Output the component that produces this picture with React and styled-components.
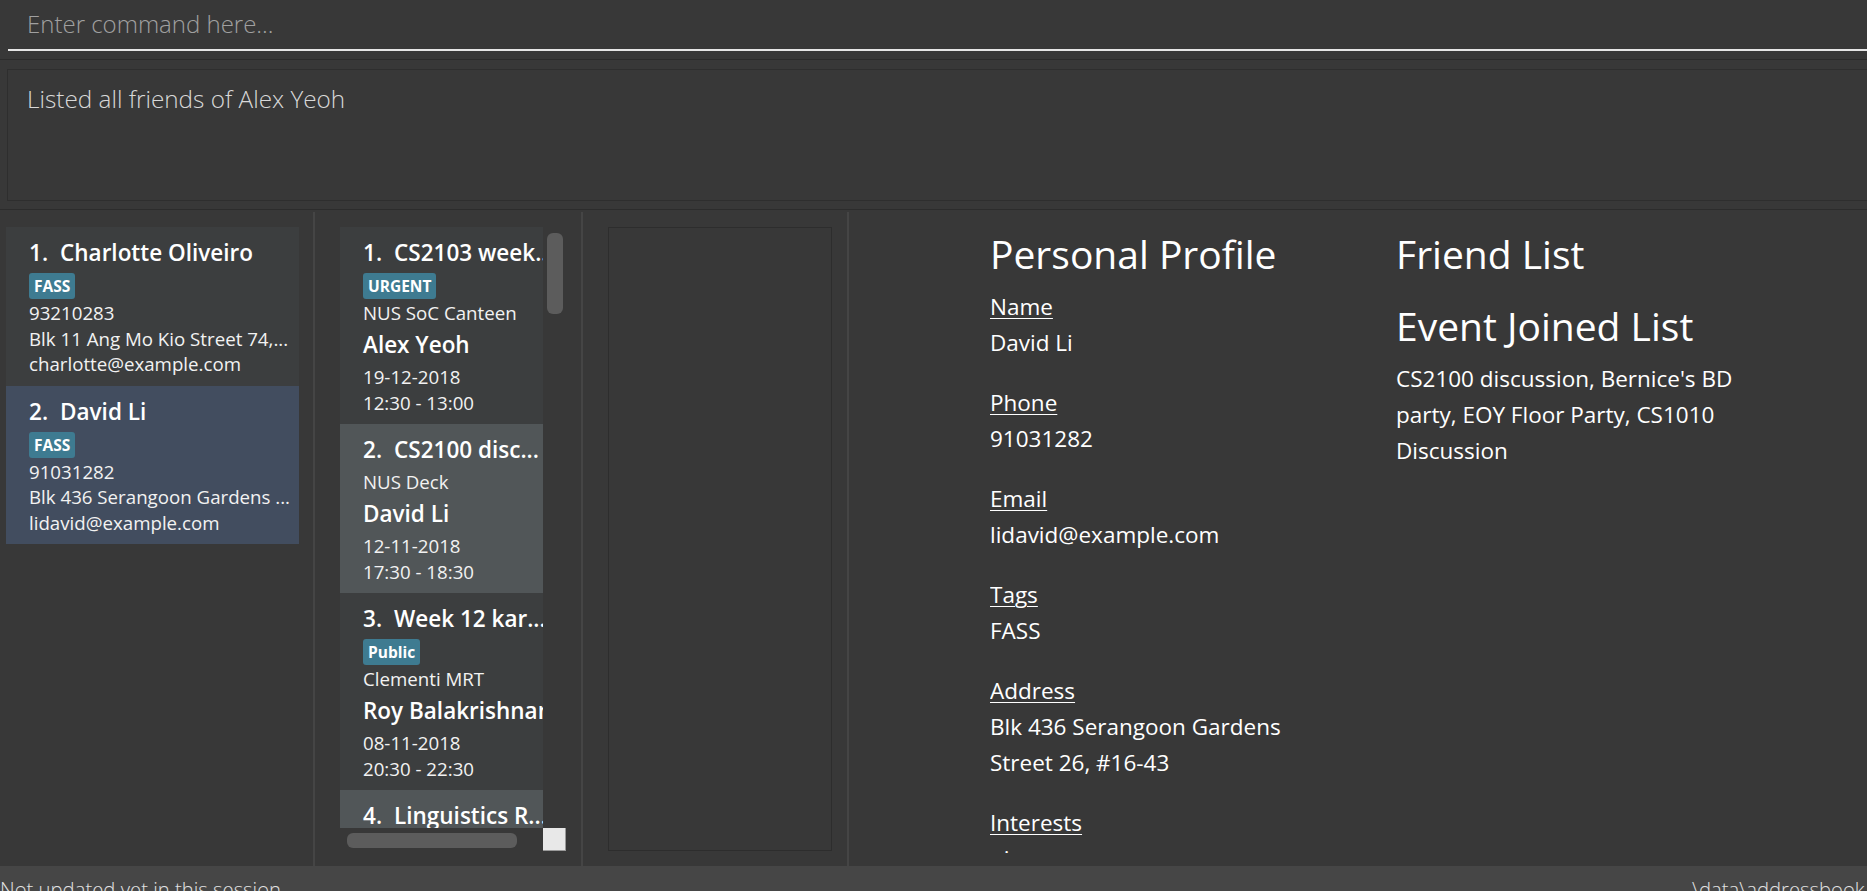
import React from "react"
import styled, { createGlobalStyle } from "styled-components"

const GlobalStyle = createGlobalStyle`
  html, body, #root {
    margin: 0;
    height: 100%;
  }
  body {
    background: #383838;
    color: #fff;
    font-family: "Open Sans", "Noto Sans", sans-serif;
    overflow: hidden;
  }
  * {
    box-sizing: border-box;
  }
`

const Window = styled.div`
  display: flex;
  flex-direction: column;
  height: 100vh;
  background: #383838;
`

const CommandPane = styled.div`
  flex: none;
  height: 60px;
  padding-left: 8px;
  border-bottom: 1px solid #2c2c2c;
`

const CommandInput = styled.input`
  display: block;
  width: 100%;
  height: 51px;
  padding: 0 0 3px 19px;
  border: none;
  border-bottom: 2px solid #e6e6e6;
  background: transparent;
  color: #fff;
  font-family: inherit;
  font-size: 24px;
  font-weight: 300;
  outline: none;

  &::placeholder {
    color: #a0a0a0;
  }
`

const ResultPane = styled.div`
  flex: none;
  height: 150px;
  padding: 9px 0 8px 7px;
  border-bottom: 1px solid #2c2c2c;
`

const ResultBox = styled.div`
  height: 132px;
  padding: 12px 0 0 19px;
  border: 1px solid #2e2e2e;
  border-right: none;
  color: #d8d8d8;
  font-size: 24.3px;
  font-weight: 300;
`

const Main = styled.div`
  flex: 1;
  min-height: 0;
  display: flex;
`

const Divider = styled.div`
  flex: none;
  width: 2px;
  margin-top: 2px;
  background: #454545;
`

const PersonColumn = styled.div`
  flex: none;
  width: 313px;
  padding: 17px 14px 0 6px;
  overflow: hidden;
`

const Card = styled.div`
  width: ${(p) => p.$width}px;
  padding: 10px 0 9px 23px;
  background: ${(p) => p.$bg};
  overflow: hidden;
  white-space: nowrap;
`

const CardTitle = styled.div`
  font-size: 22.5px;
  font-weight: 600;
  line-height: 32px;
  color: #fff;
`

const Index = styled.span`
  margin-right: 12px;
`

const TagRow = styled.div`
  display: flex;
  gap: 6px;
  height: 26px;
  margin: 4px 0 -2px;
`

const Tag = styled.span`
  height: 26px;
  padding: 0 5px;
  border-radius: 3px;
  background: #3e7b91;
  color: #fff;
  font-size: 15.5px;
  font-weight: 700;
  line-height: 26px;
`

const Details = styled.div`
  margin-top: 3px;
`

const Line = styled.div`
  font-size: 18.7px;
  line-height: 25.5px;
  color: #f2f2f2;
  margin-top: ${(p) => p.$gap || 0}px;
`

const Organizer = styled.div`
  margin-top: 4px;
  font-size: 22.5px;
  font-weight: 600;
  line-height: 30px;
  color: #fff;
`

const EventColumn = styled.div`
  flex: none;
  width: 266px;
  padding: 17px 15px 0 25px;
`

const ScrollArea = styled.div`
  display: grid;
  grid-template-columns: 203px 23px;
  grid-template-rows: 601px 23px;
`

const Viewport = styled.div`
  overflow: hidden;
`

const VTrack = styled.div`
  padding: 6px 0 0 4px;
`

const VThumb = styled.div`
  width: 16px;
  height: 81px;
  border-radius: 6px;
  background: #5c5c5c;
`

const HTrack = styled.div`
  padding: 5px 0 0 7px;
`

const HThumb = styled.div`
  width: 170px;
  height: 15px;
  border-radius: 6px;
  background: #5c5c5c;
`

const Corner = styled.div`
  background: #e8e8e8;
  border-right: 1px solid #9a9a9a;
  border-bottom: 1px solid #9a9a9a;
`

const BlankColumn = styled.div`
  flex: none;
  width: 264px;
  padding: 17px 15px 0 25px;
`

const EmptyBox = styled.div`
  width: 224px;
  height: 624px;
  border: 1px solid #2d2d2d;
`

const ProfileColumn = styled.div`
  flex: 1;
  min-width: 0;
  padding: 20px 0 13px 141px;
`

const ProfileGrid = styled.div`
  display: grid;
  grid-template-columns: 345px 345px;
  column-gap: 61px;
  align-items: start;
  height: 100%;
  overflow: hidden;
`

const Heading = styled.h2`
  margin: 0 0 11px;
  font-size: 39px;
  font-weight: 400;
  line-height: 48px;
  color: #fff;
`

const Field = styled.div`
  margin-bottom: 24px;
  font-size: 22.5px;
  line-height: 36px;
  color: #fff;
`

const FieldLabel = styled.div`
  text-decoration: underline;
  text-underline-offset: 3px;
  text-decoration-thickness: 1px;
`

const FriendList = styled.div`
  margin-bottom: 24px;
`

const StatusBar = styled.div`
  flex: none;
  display: flex;
  height: 25px;
  padding-top: 9px;
  background: #464646;
  color: #e2e2e2;
  font-size: 20.3px;
  font-weight: 300;
  white-space: nowrap;
  overflow: hidden;
`

const StatusLeft = styled.div`
  flex: 0 0 1692px;
`

const persons = [
  {
    name: "Charlotte Oliveiro",
    tags: ["FASS"],
    phone: "93210283",
    address: "Blk 11 Ang Mo Kio Street 74,...",
    email: "charlotte@example.com",
  },
  {
    name: "David Li",
    tags: ["FASS"],
    phone: "91031282",
    address: "Blk 436 Serangoon Gardens ...",
    email: "lidavid@example.com",
    selected: true,
  },
]

const events = [
  {
    name: "CS2103 week...",
    tags: ["URGENT"],
    location: "NUS SoC Canteen",
    organizer: "Alex Yeoh",
    date: "19-12-2018",
    time: "12:30 - 13:00",
  },
  {
    name: "CS2100 disc...",
    tags: [],
    location: "NUS Deck",
    organizer: "David Li",
    date: "12-11-2018",
    time: "17:30 - 18:30",
  },
  {
    name: "Week 12 kar...",
    tags: ["Public"],
    location: "Clementi MRT",
    organizer: "Roy Balakrishnan",
    date: "08-11-2018",
    time: "20:30 - 22:30",
  },
  {
    name: "Linguistics R...",
    tags: [],
    location: "AS4",
    organizer: "Irfan Ibrahim",
    date: "01-11-2018",
    time: "10:00 - 12:00",
  },
]

const profile = [
  { label: "Name", value: "David Li" },
  { label: "Phone", value: "91031282" },
  { label: "Email", value: "lidavid@example.com" },
  { label: "Tags", value: "FASS" },
  { label: "Address", value: "Blk 436 Serangoon Gardens Street 26, #16-43" },
  { label: "Interests", value: "piano" },
]

const Tags = ({ tags }) =>
  tags.length > 0 && (
    <TagRow>
      {tags.map((t) => (
        <Tag key={t}>{t}</Tag>
      ))}
    </TagRow>
  )

export default function App() {
  return (
    <Window>
      <GlobalStyle />
      <CommandPane>
        <CommandInput placeholder="Enter command here..." />
      </CommandPane>

      <ResultPane>
        <ResultBox>Listed all friends of Alex Yeoh</ResultBox>
      </ResultPane>

      <Main>
        <PersonColumn>
          {persons.map((p, i) => (
            <Card key={p.name} $width={293} $bg={p.selected ? "#424d5f" : "#3c3e3f"}>
              <CardTitle>
                <Index>{i + 1}.</Index>
                {p.name}
              </CardTitle>
              <Tags tags={p.tags} />
              <Details>
                <Line>{p.phone}</Line>
                <Line>{p.address}</Line>
                <Line>{p.email}</Line>
              </Details>
            </Card>
          ))}
        </PersonColumn>

        <Divider />

        <EventColumn>
          <ScrollArea>
            <Viewport>
              {events.map((e, i) => (
                <Card key={e.name} $width={212} $bg={i % 2 ? "#515658" : "#3c3e3f"}>
                  <CardTitle>
                    <Index>{i + 1}.</Index>
                    {e.name}
                  </CardTitle>
                  <Tags tags={e.tags} />
                  <Details>
                    <Line>{e.location}</Line>
                  </Details>
                  <Organizer>{e.organizer}</Organizer>
                  <Line $gap={4.5}>{e.date}</Line>
                  <Line>{e.time}</Line>
                </Card>
              ))}
            </Viewport>
            <VTrack>
              <VThumb />
            </VTrack>
            <HTrack>
              <HThumb />
            </HTrack>
            <Corner />
          </ScrollArea>
        </EventColumn>

        <Divider />

        <BlankColumn>
          <EmptyBox />
        </BlankColumn>

        <Divider />

        <ProfileColumn>
          <ProfileGrid>
            <div>
              <Heading>Personal Profile</Heading>
              {profile.map((f) => (
                <Field key={f.label}>
                  <FieldLabel>{f.label}</FieldLabel>
                  <div>{f.value}</div>
                </Field>
              ))}
            </div>
            <div>
              <Heading>Friend List</Heading>
              <FriendList />
              <Heading>Event Joined List</Heading>
              <Field>
                CS2100 discussion, Bernice's BD party, EOY Floor Party, CS1010 Discussion
              </Field>
            </div>
          </ProfileGrid>
        </ProfileColumn>
      </Main>

      <StatusBar>
        <StatusLeft>Not updated yet in this session</StatusLeft>
        <div>\data\addressbook.xml</div>
      </StatusBar>
    </Window>
  )
}
